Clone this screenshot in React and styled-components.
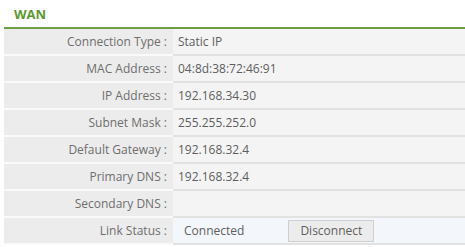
import React from 'react'
import styled, { createGlobalStyle } from 'styled-components'

const Global = createGlobalStyle`
  body {
    margin: 0;
    background: #fff;
    font-family: 'Open Sans', 'Liberation Sans', sans-serif;
  }
`

const Panel = styled('div')`
  padding-left: 4px;
  width: 461px;
`

const Title = styled('div')`
  height: 27px;
  padding-left: 10px;
  display: flex;
  align-items: center;
  color: #5c9a30;
  font-weight: bold;
  font-size: 13px;
  border-bottom: 2px solid #6d9c45;
`

const Table = styled('div')`
  display: grid;
  grid-template-columns: 169px 1fr;
`

const Label = styled('div')`
  height: 25px;
  display: flex;
  align-items: center;
  justify-content: flex-end;
  padding-right: 6px;
  background: #ececec;
  border-bottom: 2px solid #fafafa;
  color: #6e6e6e;
  font-size: 12px;
`

const Value = styled('div')`
  height: 25px;
  display: flex;
  align-items: center;
  padding-left: ${p => (p.$status ? '11px' : '5px')};
  background: ${p => (p.$status ? '#f3f7fb' : '#f4f4f4')};
  border-bottom: 2px solid #e2e2e2;
  color: #5e5e5e;
  font-size: 12px;
`

const Button = styled('button')`
  margin-left: 44px;
  height: 22px;
  width: 86px;
  border: 1px solid #cfcfcf;
  background: #ececec;
  color: #5e5e5e;
  font-family: inherit;
  font-size: 12px;
  padding: 0;
`

const rows = [
  ['Connection Type', 'Static IP'],
  ['MAC Address', '04:8d:38:72:46:91'],
  ['IP Address', '192.168.34.30'],
  ['Subnet Mask', '255.255.252.0'],
  ['Default Gateway', '192.168.32.4'],
  ['Primary DNS', '192.168.32.4'],
  ['Secondary DNS', '']
]

export default function App() {
  return (
    <>
      <Global />
      <Panel>
        <Title>WAN</Title>
        <Table>
          {rows.map(([k, v]) => (
            <React.Fragment key={k}>
              <Label>{k} :</Label>
              <Value>{v}</Value>
            </React.Fragment>
          ))}
          <Label>Link Status :</Label>
          <Value $status>
            Connected
            <Button>Disconnect</Button>
          </Value>
        </Table>
      </Panel>
    </>
  )
}
